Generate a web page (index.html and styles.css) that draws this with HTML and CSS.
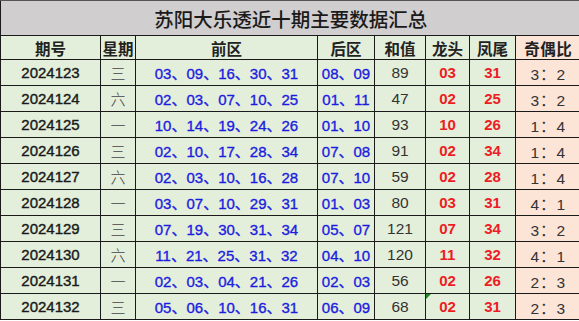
FILE: index.html
```html
<!DOCTYPE html>
<html lang="zh">
<head>
<meta charset="utf-8">
<link rel="stylesheet" href="styles.css">
</head>
<body>
<table class="sheet">
  <colgroup>
    <col class="c-period"><col class="c-week"><col class="c-front"><col class="c-back">
    <col class="c-sum"><col class="c-head"><col class="c-tail"><col class="c-ratio">
  </colgroup>
  <tr class="title-row"><td colspan="8" class="title">苏阳大乐透近十期主要数据汇总</td></tr>
  <tr class="head-row">
    <th>期号</th><th>星期</th><th>前区</th><th>后区</th><th>和值</th><th>龙头</th><th>凤尾</th><th class="ratio">奇偶比</th>
  </tr>
  <tr><td class="period">2024123</td><td class="week">三</td><td class="blue">03、09、16、30、31</td><td class="blue">08、09</td><td class="sum">89</td><td class="red">03</td><td class="red">31</td><td class="ratio">3：2</td></tr>
  <tr><td class="period">2024124</td><td class="week">六</td><td class="blue">02、03、07、10、25</td><td class="blue">01、11</td><td class="sum">47</td><td class="red">02</td><td class="red">25</td><td class="ratio">3：2</td></tr>
  <tr><td class="period">2024125</td><td class="week">一</td><td class="blue">10、14、19、24、26</td><td class="blue">01、10</td><td class="sum">93</td><td class="red">10</td><td class="red">26</td><td class="ratio">1：4</td></tr>
  <tr><td class="period">2024126</td><td class="week">三</td><td class="blue">02、10、17、28、34</td><td class="blue">07、08</td><td class="sum">91</td><td class="red">02</td><td class="red">34</td><td class="ratio">1：4</td></tr>
  <tr><td class="period">2024127</td><td class="week">六</td><td class="blue">02、03、10、16、28</td><td class="blue">07、10</td><td class="sum">59</td><td class="red">02</td><td class="red">28</td><td class="ratio">1：4</td></tr>
  <tr><td class="period">2024128</td><td class="week">一</td><td class="blue">03、07、10、29、31</td><td class="blue">01、03</td><td class="sum">80</td><td class="red">03</td><td class="red">31</td><td class="ratio">4：1</td></tr>
  <tr><td class="period">2024129</td><td class="week">三</td><td class="blue">07、19、30、31、34</td><td class="blue">05、07</td><td class="sum">121</td><td class="red">07</td><td class="red">34</td><td class="ratio">3：2</td></tr>
  <tr><td class="period">2024130</td><td class="week">六</td><td class="blue">11、21、25、31、32</td><td class="blue">04、10</td><td class="sum">120</td><td class="red">11</td><td class="red">32</td><td class="ratio">4：1</td></tr>
  <tr><td class="period">2024131</td><td class="week">一</td><td class="blue">02、03、04、21、26</td><td class="blue">02、03</td><td class="sum">56</td><td class="red">02</td><td class="red">26</td><td class="ratio">2：3</td></tr>
  <tr><td class="period">2024132</td><td class="week">三</td><td class="blue">05、06、10、16、31</td><td class="blue">06、09</td><td class="sum">68</td><td class="red marked">02</td><td class="red">31</td><td class="ratio">2：3</td></tr>
</table>
</body>
</html>
```
FILE: styles.css
```css
html, body {
  margin: 0;
  padding: 0;
  background: #ffffff;
}
.sheet {
  border-collapse: collapse;
  table-layout: fixed;
  width: 580px;
  font-family: "Liberation Sans", "Noto Sans CJK SC", sans-serif;
  font-size: 15px;
  color: #1e1e1e;
}
.c-period { width: 100px; }
.c-week { width: 35px; }
.c-front { width: 182px; }
.c-back { width: 57px; }
.c-sum { width: 51px; }
.c-head { width: 44px; }
.c-tail { width: 46px; }
.c-ratio { width: 65px; }

.sheet td, .sheet th {
  border: 1px solid #1a1a1a;
  background: #e3efda;
  text-align: center;
  padding: 0;
  height: 25px;
  white-space: nowrap;
  overflow: hidden;
}
.title-row td.title {
  background: #d0cecf;
  height: 34px;
  font-size: 19.5px;
  font-family: "Noto Sans CJK SC", sans-serif;
  font-weight: 500;
  color: #1a1a1a;
  border-right: none;
  border-top-color: #555;
}
.head-row th {
  height: 23px;
  font-family: "Noto Sans CJK SC", sans-serif;
  font-weight: 700;
  font-size: 15.5px;
  color: #222;
}
.sheet .ratio {
  background: #fce4d6;
  border-right: none;
}
.head-row th.ratio { letter-spacing: 0.5px; }
.period {
  font-size: 15px;
  color: #1a1a1a;
  -webkit-text-stroke: 0.4px #1a1a1a;
}
.week {
  font-family: "Noto Sans CJK SC", sans-serif;
  font-weight: 300;
  font-size: 15px;
  color: #444;
}
.blue {
  color: #1c1ce0;
  font-size: 15px;
  -webkit-text-stroke: 0.35px #1c1ce0;
}
.sum {
  color: #333;
  font-size: 15.5px;
}
.red {
  color: #ee1c25;
  font-weight: 700;
  font-size: 15px;
}
td.ratio {
  color: #333;
  font-size: 15.5px;
  letter-spacing: 1px;
}
.marked {
  position: relative;
}
.marked::before {
  content: "";
  position: absolute;
  left: 0;
  top: 0;
  border-top: 5px solid #1f8a1f;
  border-right: 5px solid transparent;
}
```
